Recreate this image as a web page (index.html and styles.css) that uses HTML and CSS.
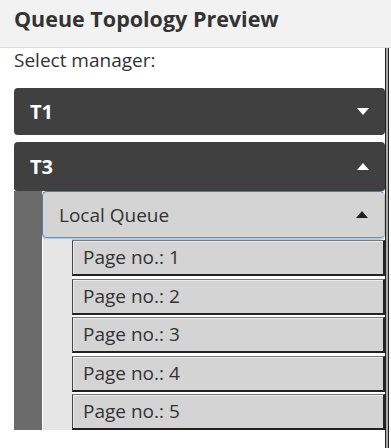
FILE: index.html
```html
<!DOCTYPE html>
<html lang="en">
<head>
<meta charset="utf-8">
<title>Queue Topology Preview</title>
<link rel="stylesheet" href="styles.css">
</head>
<body>
<div class="header"><h1 class="title">Queue Topology Preview</h1></div>
<div class="panel">
  <div class="label">Select manager:</div>
  <div class="bar"><span class="bar-name">T1</span><svg class="caret" width="12" height="7" viewBox="0 0 12 7"><path d="M0 0H12L6 7Z" fill="#fff"/></svg></div>
  <div class="group">
    <div class="bar bar-open"><span class="bar-name">T3</span><svg class="caret" width="12" height="7" viewBox="0 0 12 7"><path d="M0 7H12L6 0Z" fill="#fff"/></svg></div>
    <div class="group-body">
      <div class="rail"></div>
      <div class="inner">
        <div class="lq"><span>Local Queue</span><svg class="caret" width="12" height="7" viewBox="0 0 12 7"><path d="M0 7H12L6 0Z" fill="#222"/></svg></div>
        <div class="sub">
          <div class="subrail"></div>
          <div class="pages">
            <div class="page">Page no.: 1</div>
            <div class="page">Page no.: 2</div>
            <div class="page">Page no.: 3</div>
            <div class="page">Page no.: 4</div>
            <div class="page">Page no.: 5</div>
          </div>
        </div>
      </div>
    </div>
  </div>
</div>
</body>
</html>
```
FILE: styles.css
```css
* { box-sizing: border-box; }
html, body { margin: 0; padding: 0; background: #fff; }
body {
  width: 391px;
  height: 448px;
  overflow: hidden;
  font-family: "Open Sans", "Noto Sans", sans-serif;
  color: #333;
}
.header {
  height: 48px;
  background: #f2f2f2;
  border-bottom: 1px solid #dcdcdc;
  padding: 4px 14px 0;
}
.title {
  margin: 0;
  font-size: 21.5px;
  line-height: 30px;
  font-weight: 700;
  color: #333;
}
.panel {
  width: 386px;
  height: 400px;
  padding-left: 14px;
  border-right: 1px solid #222;
  box-shadow: 2px 0 0 #a8a8a8, 3px 0 0 #222;
}
.label {
  font-size: 19px;
  line-height: 24px;
  padding-top: 0;
  height: 40px;
}
.bar {
  height: 47px;
  background: #404040;
  border-radius: 4px;
  display: flex;
  align-items: center;
  justify-content: space-between;
  padding: 0 16px 0 16px;
  color: #fff;
}
.bar-name {
  font-weight: 700;
  font-size: 20px;
  line-height: 24px;
}
.group { margin-top: 7px; }
.bar-open {
  height: 49px;
  border-radius: 4px 4px 3px 3px;
}
.group-body { display: flex; }
.rail {
  width: 28px;
  background: #6b6b6b;
  height: 239px;
}
.inner { flex: 1; min-width: 0; }
.lq {
  height: 47px;
  margin-top: 0;
  background: #d4d4d4;
  border: 1px solid #c2c2c2;
  border-top-color: #4f7db0;
  border-left-color: #4f7db0;
  border-bottom-color: #8a8a8a;
  border-right-color: #bdbdbd;
  border-radius: 5px;
  box-shadow: 0 2px 0 #a9cbee;
  display: flex;
  align-items: center;
  justify-content: space-between;
  padding: 0 16px 0 16px;
  font-size: 19px;
  line-height: 24px;
}
.sub { display: flex; margin-top: 1px; }
.subrail {
  width: 29px;
  background: #e6e6e6;
  margin-left: 1px;
  height: 191px;
}
.pages { flex: 1; min-width: 0; display: flex; flex-direction: column; gap: 2.5px; padding-top: 1px; }
.page {
  height: 36px;
  background: #d4d4d4;
  border-top: 1px solid #777;
  border-left: 1px solid #444;
  border-right: 2px solid #222;
  border-bottom: 2px solid #222;
  box-shadow: inset 1px 1px 0 #ececec;
  padding-left: 10px;
  font-size: 19px;
  line-height: 32px;
  color: #333;
}
```
